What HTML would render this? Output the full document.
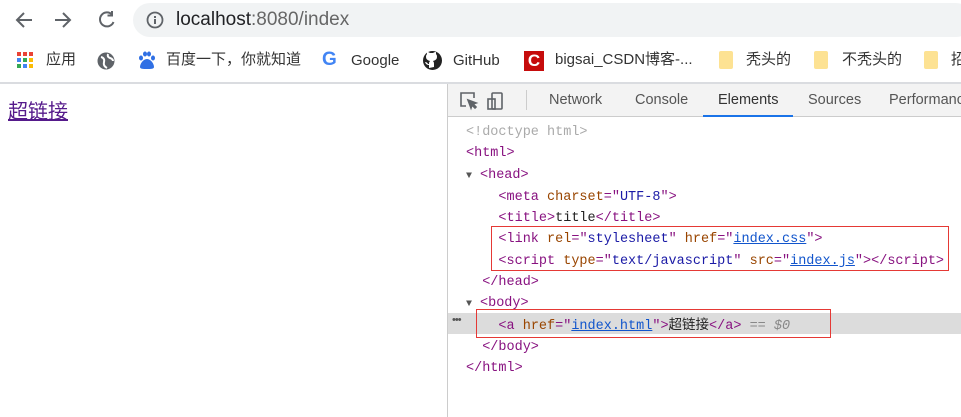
<!DOCTYPE html>
<html><head><meta charset="utf-8"><style>
*{margin:0;padding:0;box-sizing:border-box}
body{width:961px;height:417px;overflow:hidden;background:#fff;font-family:"Liberation Sans","Noto Sans CJK SC",sans-serif;position:relative}
.abs{position:absolute}
.addr{left:133px;top:3px;width:840px;height:34px;background:#f1f3f4;border-radius:17px}
.url{left:176px;top:9px;font-size:19px;color:#202124}
.bm{top:50px;font-size:15px;color:#333;line-height:20px}
.code{font-family:"Liberation Mono","Noto Sans CJK SC",monospace;font-size:13.5px;position:absolute;white-space:pre;line-height:21.3px}
.t{color:#881280}.a{color:#994500}.v{color:#1a1aa6}.l{color:#1155cc;text-decoration:underline}.g{color:#aaa}.k{color:#222}
.tr{display:inline-block;width:14px;color:#555;font-size:10px;text-align:left}
.tab{top:92px;font-size:14.5px;color:#555}
</style></head><body>
<div class="abs addr"></div>
<svg class="abs" style="left:14px;top:10px" width="110" height="20" viewBox="0 0 110 20" fill="none" stroke="#5f6368" stroke-width="2">
<path d="M18 10H4M10 3L3 10l7 7"/><path d="M41 10h14M49 3l7 7-7 7"/>
<path d="M98 4.5A7 7 0 1 0 99.5 12" /><path d="M98 1v4.5h-4.5" />
</svg>
<svg class="abs" style="left:146px;top:11px" width="18" height="18"><circle cx="9" cy="9" r="7.5" fill="none" stroke="#5f6368" stroke-width="1.8"/><rect x="8" y="8" width="2" height="5" fill="#5f6368"/><rect x="8" y="5" width="2" height="2" fill="#5f6368"/></svg>
<div class="abs url">localhost<span style="color:#666">:8080/index</span></div>
<svg class="abs" style="left:17px;top:52px" width="17" height="17">
<rect x="0" y="0" width="4" height="4" fill="#ea4335"/><rect x="6" y="0" width="4" height="4" fill="#ea4335"/><rect x="12" y="0" width="4" height="4" fill="#ea4335"/>
<rect x="0" y="6" width="4" height="4" fill="#4285f4"/><rect x="6" y="6" width="4" height="4" fill="#34a853"/><rect x="12" y="6" width="4" height="4" fill="#fbbc05"/>
<rect x="0" y="12" width="4" height="4" fill="#34a853"/><rect x="6" y="12" width="4" height="4" fill="#4285f4"/><rect x="12" y="12" width="4" height="4" fill="#fbbc05"/></svg>
<div class="abs bm" style="left:46px">应用</div>
<svg class="abs" style="left:97px;top:52px" width="18" height="18"><circle cx="9" cy="9" r="8.5" fill="#5f6368"/><path d="M4 5q4 1 3 5t3 6M11 2q-1 3 2 4t3 3" stroke="#fff" stroke-width="2" fill="none"/></svg>
<svg class="abs" style="left:137px;top:51px" width="19" height="19"><ellipse cx="4" cy="7" rx="2" ry="2.5" fill="#2f6fe4"/><ellipse cx="8" cy="3" rx="2" ry="2.5" fill="#2f6fe4"/><ellipse cx="12" cy="3" rx="2" ry="2.5" fill="#2f6fe4"/><ellipse cx="16" cy="7" rx="2" ry="2.5" fill="#2f6fe4"/><path d="M10 8c-4 0-7 5-7 8 0 2 3 2 7 2s7 0 7-2c0-3-3-8-7-8z" fill="#2f6fe4"/></svg>
<div class="abs bm" style="left:166px">百度一下，你就知道</div>
<div class="abs" style="left:322px;top:50px;font-size:19px;font-weight:bold;color:#4285f4;line-height:20px">G</div>
<div class="abs bm" style="left:351px;top:51px">Google</div>
<svg class="abs" style="left:423px;top:51px" width="19" height="19"><circle cx="9.5" cy="9.5" r="9.5" fill="#222"/><path d="M6 17v-3q-3 0-4-3 2 0 3 2h1q0-2 1-3-4-1-4-4 0-2 1-3 0-1 0-2 2 0 3 1h3q1-1 3-1 0 1 0 2 1 1 1 3 0 3-4 4 1 1 1 3v3z" fill="#fff"/></svg>
<div class="abs bm" style="left:453px;top:51px">GitHub</div>
<div class="abs" style="left:524px;top:51px;width:20px;height:20px;background:#c60c0c;color:#fff;font-weight:bold;font-size:17px;text-align:center;line-height:20px">C</div>
<div class="abs bm" style="left:555px">bigsai_CSDN博客-...</div>
<div class="abs" style="left:719px;top:51px;width:14px;height:18px;background:#fde293;border-radius:2px"></div>
<div class="abs bm" style="left:746px">秃头的</div>
<div class="abs" style="left:814px;top:51px;width:14px;height:18px;background:#fde293;border-radius:2px"></div>
<div class="abs bm" style="left:842px">不秃头的</div>
<div class="abs" style="left:924px;top:51px;width:14px;height:18px;background:#fde293;border-radius:2px"></div>
<div class="abs bm" style="left:951px">招</div>
<div class="abs" style="left:0;top:82px;width:961px;height:2px;background:#dadce0"></div>
<div class="abs" style="left:8px;top:95px;font-size:20px;color:#551a8b;text-decoration:underline">超链接</div>
<div class="abs" style="left:447px;top:84px;width:1px;height:333px;background:#ccc"></div>
<div class="abs" style="left:448px;top:84px;width:513px;height:33px;background:#f3f3f3;border-bottom:1px solid #ccc"></div>
<svg class="abs" style="left:459px;top:91px" width="60" height="20" fill="none" stroke="#5f6368" stroke-width="1.6">
<path d="M7 15H2V2h13v5"/><path d="M9 9l8 3-3 1 3 3-1 1-3-3-1 3z" fill="#5f6368"/>
<rect x="33" y="2" width="10" height="16" rx="1"/><rect x="29" y="8" width="7" height="10"/>
</svg>
<div class="abs" style="left:526px;top:90px;width:1px;height:20px;background:#ccc"></div>
<div class="abs tab" style="left:549px">Network</div>
<div class="abs tab" style="left:635px">Console</div>
<div class="abs tab" style="left:718px;color:#333">Elements</div>
<div class="abs" style="left:703px;top:115px;width:90px;height:2px;background:#1a73e8"></div>
<div class="abs tab" style="left:808px">Sources</div>
<div class="abs tab" style="left:889px">Performance</div>
<div class="abs" style="left:448px;top:313px;width:513px;height:21px;background:#dcdcdc"></div>
<div class="abs" style="left:452px;top:314px;font-size:11px;color:#555;letter-spacing:-1px">•••</div>
<div class="code" style="left:466px;top:122px"><span class="g">&lt;!doctype html&gt;</span>
<span class="t">&lt;html&gt;</span>
<span class="tr">▼</span><span class="t">&lt;head&gt;</span>
    <span class="t">&lt;meta</span> <span class="a">charset</span><span class="t">="</span><span class="v">UTF-8</span><span class="t">"&gt;</span>
    <span class="t">&lt;title&gt;</span><span class="k">title</span><span class="t">&lt;/title&gt;</span>
    <span class="t">&lt;link</span> <span class="a">rel</span><span class="t">="</span><span class="v">stylesheet</span><span class="t">"</span> <span class="a">href</span><span class="t">="</span><span class="l">index.css</span><span class="t">"&gt;</span>
    <span class="t">&lt;script</span> <span class="a">type</span><span class="t">="</span><span class="v">text/javascript</span><span class="t">"</span> <span class="a">src</span><span class="t">="</span><span class="l">index.js</span><span class="t">"&gt;&lt;/script&gt;</span>
  <span class="t">&lt;/head&gt;</span>
<span class="tr">▼</span><span class="t">&lt;body&gt;</span>
    <span class="t">&lt;a</span> <span class="a">href</span><span class="t">="</span><span class="l">index.html</span><span class="t">"&gt;</span><span class="k">超链接</span><span class="t">&lt;/a&gt;</span> <span style="color:#888">== <i>$0</i></span>
  <span class="t">&lt;/body&gt;</span>
<span class="t">&lt;/html&gt;</span></div>
<div class="abs" style="left:491px;top:226px;width:458px;height:45px;border:1.5px solid #e53935"></div>
<div class="abs" style="left:476px;top:309px;width:355px;height:29px;border:1.5px solid #e53935"></div>
</body></html>
